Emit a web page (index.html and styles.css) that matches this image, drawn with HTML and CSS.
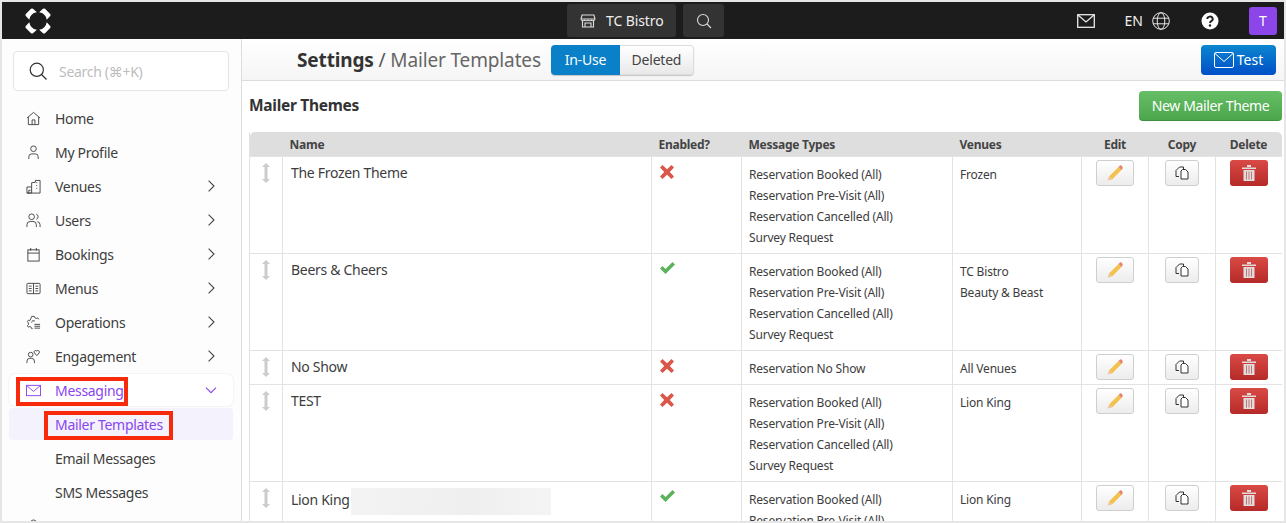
FILE: index.html
```html
<!DOCTYPE html>
<html lang="en">
<head>
<meta charset="utf-8">
<title>Mailer Templates</title>
<link rel="stylesheet" href="styles.css">
</head>
<body>
<div class="app">
  <header class="topbar">
    <div class="top-left">
      <svg class="logo" viewBox="0 0 26 26" width="26" height="26"><g fill="#fff"><path d="M8 .8 11.800 4.300A9 9 0 0 0 4.300 11.800L.8 8Q0 7 .8 6L6 .8Q7 0 8 .8Z"/><path d="M8 .8 11.800 4.300A9 9 0 0 0 4.300 11.800L.8 8Q0 7 .8 6L6 .8Q7 0 8 .8Z" transform="rotate(90 13 13)"/><path d="M8 .8 11.800 4.300A9 9 0 0 0 4.300 11.800L.8 8Q0 7 .8 6L6 .8Q7 0 8 .8Z" transform="rotate(180 13 13)"/><path d="M8 .8 11.800 4.300A9 9 0 0 0 4.300 11.800L.8 8Q0 7 .8 6L6 .8Q7 0 8 .8Z" transform="rotate(270 13 13)"/></g></svg>
    </div>
    <div class="top-center">
      <div class="top-btn venue-btn">
        <svg viewBox="0 0 16 16" width="16" height="16" fill="none" stroke="#ddd" stroke-width="1.100"><path d="M2 2h12l1 4a2 2 0 0 1-3.500 1 2.300 2.300 0 0 1-3.500 0 2.300 2.300 0 0 1-3.500 0A2 2 0 0 1 1 6Z"/><path d="M2.500 8v6h11V8M1 6h14M5 14v-4h6v4"/></svg>
        <span>TC Bistro</span>
      </div>
      <div class="top-btn search-btn">
        <svg viewBox="0 0 16 16" width="16" height="16" fill="none" stroke="#ddd" stroke-width="1.100"><circle cx="7" cy="7" r="5.500"/><path d="m11 11 4 4"/></svg>
      </div>
    </div>
    <div class="top-right">
      <svg class="t-mail" viewBox="0 0 18 14" width="18" height="14" fill="none" stroke="#e8e8e8" stroke-width="1.300"><rect x=".7" y=".7" width="16.600" height="12.600"/><path d="m1 1 8 7 8-7"/></svg>
      <span class="lang">EN</span>
      <svg class="t-globe" viewBox="0 0 18 18" width="18" height="18" fill="none" stroke="#e8e8e8" stroke-width="1"><circle cx="9" cy="9" r="8.300"/><ellipse cx="9" cy="9" rx="3.800" ry="8.300"/><path d="M1 6.200h16M1 11.800h16"/></svg>
      <svg class="t-help" viewBox="0 0 18 18" width="18" height="18"><circle cx="9" cy="9" r="8.500" fill="#fff"/><path d="M6.300 7a2.700 2.400 0 1 1 4 2.100c-.9.500-1.300 1-1.300 2" fill="none" stroke="#1c1c1c" stroke-width="1.900"/><circle cx="9" cy="13.500" r="1.200" fill="#1c1c1c"/></svg>
      <div class="avatar">T</div>
    </div>
  </header>
  <div class="body">
    <aside class="sidebar">
      <div class="search">
        <svg viewBox="0 0 18 18" width="18" height="18" fill="none" stroke="#333" stroke-width="1.200"><circle cx="7.800" cy="7.800" r="6.600"/><path d="m12.500 12.500 5 5"/></svg>
        <span>Search (⌘+K)</span>
      </div>
      <nav class="nav">
        <a class="item"><svg viewBox="0 0 16 16" fill="none" stroke="#444"><path d="M1 7.500 8 1.500l7 6M2.500 6.500v8h11v-8M6.500 14.500v-5h3v5"/></svg><span>Home</span></a>
        <a class="item"><svg viewBox="0 0 16 16" fill="none" stroke="#444"><circle cx="8" cy="4" r="3"/><path d="M3 15v-2.500A3 3 0 0 1 6 9.500h4a3 3 0 0 1 3 3V15"/></svg><span>My Profile</span></a>
        <a class="item"><svg viewBox="0 0 16 16" fill="none" stroke="#444"><path d="M1 15V8.500h5V15ZM6 8.500V4l4-.5V1.500h5V15H1M3 15v-3h2"/><path d="M11 4h2M11 7h2M11 10h2" stroke-dasharray="1 1"/></svg><span>Venues</span><svg class="chev" viewBox="0 0 10 10" fill="none" stroke="#444" stroke-width=".9"><path d="m3 .5 4.500 4.500L3 9.500"/></svg></a>
        <a class="item"><svg viewBox="0 0 16 16" fill="none" stroke="#444"><circle cx="6" cy="4" r="3"/><path d="M1 15v-2.500a3.500 3.500 0 0 1 3.500-3.500h3a3.500 3.500 0 0 1 3.500 3.500V15M11 1.200a3 3 0 0 1 0 5.600M12 9.200a3.500 3.500 0 0 1 3 3.300V15"/></svg><span>Users</span><svg class="chev" viewBox="0 0 10 10" fill="none" stroke="#444" stroke-width=".9"><path d="m3 .5 4.500 4.500L3 9.500"/></svg></a>
        <a class="item"><svg viewBox="0 0 16 16" fill="none" stroke="#444"><rect x="2" y="3" width="12" height="12"/><path d="M2 6.500h12M5 1v3M11 1v3"/></svg><span>Bookings</span><svg class="chev" viewBox="0 0 10 10" fill="none" stroke="#444" stroke-width=".9"><path d="m3 .5 4.500 4.500L3 9.500"/></svg></a>
        <a class="item"><svg viewBox="0 0 16 16" fill="none" stroke="#444"><rect x="1" y="2.500" width="14" height="11" rx="1"/><path d="M8 2.500v11M3 5.500h3M3 8h3M3 10.500h3M10 5.500h3M10 8h3M10 10.500h3"/></svg><span>Menus</span><svg class="chev" viewBox="0 0 10 10" fill="none" stroke="#444" stroke-width=".9"><path d="m3 .5 4.500 4.500L3 9.500"/></svg></a>
        <a class="item"><svg viewBox="0 0 16 16" fill="none" stroke="#444"><path d="M7 14.500H6l-.5-1.500-1.500-.7-1.500.7-1-1.500 1-1.200v-2l-1-1.300 1-1.500 1.500.6L5.500 3 6 1.500h3L9.500 3l1.500.7 1.500-.6 1 1.500"/><path d="M6 8a2 2 0 0 1 3.500-1.300M9 10h6M9 12h6M9 14h6"/></svg><span>Operations</span><svg class="chev" viewBox="0 0 10 10" fill="none" stroke="#444" stroke-width=".9"><path d="m3 .5 4.500 4.500L3 9.500"/></svg></a>
        <a class="item"><svg viewBox="0 0 16 16" fill="none" stroke="#444"><circle cx="5" cy="6" r="2.500"/><path d="M1 15v-2a3 3 0 0 1 3-3h2a3 3 0 0 1 3 3v2M11.500 7 9 4.200a1.500 1.500 0 0 1 2.500-2 1.500 1.500 0 0 1 2.500 2Z"/></svg><span>Engagement</span><svg class="chev" viewBox="0 0 10 10" fill="none" stroke="#444" stroke-width=".9"><path d="m3 .5 4.500 4.500L3 9.500"/></svg></a>
        <a class="item open"><svg viewBox="0 0 16 16" fill="none" stroke="#8b45ee"><rect x=".5" y="2.500" width="15" height="11"/><path d="m1 3 7 6 7-6"/></svg><span class="mark mark-a">Messaging</span><svg class="chev" viewBox="0 0 10 10" fill="none" stroke="#8b45ee" stroke-width=".9"><path d="m.8 3 4.200 4.200L9.200 3"/></svg></a>
        <a class="sub active"><span class="mark mark-b">Mailer Templates</span></a>
        <a class="sub"><span>Email Messages</span></a>
        <a class="sub"><span>SMS Messages</span></a>
        <a class="item"><svg viewBox="0 0 16 16" fill="none" stroke="#444"><circle cx="8" cy="4" r="3"/></svg></a>
      </nav>
    </aside>
    <main class="main">
      <div class="pagehead">
        <h1 class="title"><b>Settings</b> / <span>Mailer Templates</span></h1>
        <div class="toggle"><span class="on">In-Use</span><span class="off">Deleted</span></div>
        <button class="test"><svg viewBox="0 0 20 16" width="20" height="16" fill="none" stroke="#fff" stroke-width="1"><rect x=".5" y=".5" width="19" height="15" rx="1.500"/><path d="m1 1.500 9 8 9-8"/></svg>Test</button>
      </div>
      <div class="content">
        <div class="section-head">
          <h2>Mailer Themes</h2>
          <button class="new">New Mailer Theme</button>
        </div>
        <table class="themes">
          <colgroup><col class="c-drag"><col class="c-name"><col class="c-en"><col class="c-types"><col class="c-ven"><col class="c-act"><col class="c-act"><col class="c-act"></colgroup>
          <thead><tr><th></th><th>Name</th><th>Enabled?</th><th>Message Types</th><th>Venues</th><th class="ctr">Edit</th><th class="ctr">Copy</th><th class="ctr">Delete</th></tr></thead>
          <tbody>
            <tr>
              <td class="drag"><svg viewBox="0 0 8 20" width="8" height="20"><path d="M4 0 8 4H5.500v12H8l-4 4-4-4h2.500V4H0Z" fill="#ccc"/></svg></td>
              <td class="name">The Frozen Theme</td>
              <td class="en"><svg viewBox="0 0 14 14" width="14" height="14"><path d="M2.500 0 7 4.200 11.500 0 14 2.500 9.800 7l4.200 4.500-2.500 2.500L7 9.800 2.500 14 0 11.500 4.200 7 0 2.500Z" fill="#d9574b"/></svg></td>
              <td class="list"><div>Reservation Booked (All)</div><div>Reservation Pre-Visit (All)</div><div>Reservation Cancelled (All)</div><div>Survey Request</div></td>
              <td class="list"><div>Frozen</div></td>
              <td class="act"><button class="b-edit"><svg viewBox="0 0 16 16" width="16" height="16"><path d="M11.500 2 14.500 5 5 14.500 2 11.500Z" fill="#f2c14e"/><path d="M11.500 2 13 .5Q14 0 15 1L15.500 2Q16 3 15.500 3.500L14.500 5Z" fill="#e8836a"/><path d="M2 11.500 5 14.500 .5 15.500Z" fill="#eec49a"/></svg></button></td>
              <td class="act"><button class="b-copy"><svg viewBox="0 0 14 14" width="14" height="14" fill="none" stroke="#333"><path d="M8.500 3V1H4.500L1 4.500V10.500H4"/><path d="M7.500 3.500H10.500L13 6V13H6V5Z" fill="#fff"/></svg></button></td>
              <td class="act"><button class="b-del"><svg viewBox="0 0 14 16" width="14" height="16"><path d="M0 2.500h14V4H0ZM5 0h4v2H5ZM1.500 5h11v11h-11Z" fill="#e3dcdc"/><path d="M4.500 6.500v8M7 6.500v8M9.500 6.500v8" stroke="#b77" fill="none"/></svg></button></td>
            </tr>
            <tr>
              <td class="drag"><svg viewBox="0 0 8 20" width="8" height="20"><path d="M4 0 8 4H5.500v12H8l-4 4-4-4h2.500V4H0Z" fill="#ccc"/></svg></td>
              <td class="name">Beers &amp; Cheers</td>
              <td class="en"><svg viewBox="0 0 15 12" width="15" height="12"><path d="M0 6.500 2.500 4 5.500 7 12.500 0 15 2.500 5.500 12Z" fill="#5cb25c"/></svg></td>
              <td class="list"><div>Reservation Booked (All)</div><div>Reservation Pre-Visit (All)</div><div>Reservation Cancelled (All)</div><div>Survey Request</div></td>
              <td class="list"><div>TC Bistro</div><div>Beauty &amp; Beast</div></td>
              <td class="act"><button class="b-edit"><svg viewBox="0 0 16 16" width="16" height="16"><path d="M11.500 2 14.500 5 5 14.500 2 11.500Z" fill="#f2c14e"/><path d="M11.500 2 13 .5Q14 0 15 1L15.500 2Q16 3 15.500 3.500L14.500 5Z" fill="#e8836a"/><path d="M2 11.500 5 14.500 .5 15.500Z" fill="#eec49a"/></svg></button></td>
              <td class="act"><button class="b-copy"><svg viewBox="0 0 14 14" width="14" height="14" fill="none" stroke="#333"><path d="M8.500 3V1H4.500L1 4.500V10.500H4"/><path d="M7.500 3.500H10.500L13 6V13H6V5Z" fill="#fff"/></svg></button></td>
              <td class="act"><button class="b-del"><svg viewBox="0 0 14 16" width="14" height="16"><path d="M0 2.500h14V4H0ZM5 0h4v2H5ZM1.500 5h11v11h-11Z" fill="#e3dcdc"/><path d="M4.500 6.500v8M7 6.500v8M9.500 6.500v8" stroke="#b77" fill="none"/></svg></button></td>
            </tr>
            <tr>
              <td class="drag"><svg viewBox="0 0 8 20" width="8" height="20"><path d="M4 0 8 4H5.500v12H8l-4 4-4-4h2.500V4H0Z" fill="#ccc"/></svg></td>
              <td class="name">No Show</td>
              <td class="en"><svg viewBox="0 0 14 14" width="14" height="14"><path d="M2.500 0 7 4.200 11.500 0 14 2.500 9.800 7l4.200 4.500-2.500 2.500L7 9.800 2.500 14 0 11.500 4.200 7 0 2.500Z" fill="#d9574b"/></svg></td>
              <td class="list"><div>Reservation No Show</div></td>
              <td class="list"><div>All Venues</div></td>
              <td class="act"><button class="b-edit"><svg viewBox="0 0 16 16" width="16" height="16"><path d="M11.500 2 14.500 5 5 14.500 2 11.500Z" fill="#f2c14e"/><path d="M11.500 2 13 .5Q14 0 15 1L15.500 2Q16 3 15.500 3.500L14.500 5Z" fill="#e8836a"/><path d="M2 11.500 5 14.500 .5 15.500Z" fill="#eec49a"/></svg></button></td>
              <td class="act"><button class="b-copy"><svg viewBox="0 0 14 14" width="14" height="14" fill="none" stroke="#333"><path d="M8.500 3V1H4.500L1 4.500V10.500H4"/><path d="M7.500 3.500H10.500L13 6V13H6V5Z" fill="#fff"/></svg></button></td>
              <td class="act"><button class="b-del"><svg viewBox="0 0 14 16" width="14" height="16"><path d="M0 2.500h14V4H0ZM5 0h4v2H5ZM1.500 5h11v11h-11Z" fill="#e3dcdc"/><path d="M4.500 6.500v8M7 6.500v8M9.500 6.500v8" stroke="#b77" fill="none"/></svg></button></td>
            </tr>
            <tr>
              <td class="drag"><svg viewBox="0 0 8 20" width="8" height="20"><path d="M4 0 8 4H5.500v12H8l-4 4-4-4h2.500V4H0Z" fill="#ccc"/></svg></td>
              <td class="name">TEST</td>
              <td class="en"><svg viewBox="0 0 14 14" width="14" height="14"><path d="M2.500 0 7 4.200 11.500 0 14 2.500 9.800 7l4.200 4.500-2.500 2.500L7 9.800 2.500 14 0 11.500 4.200 7 0 2.500Z" fill="#d9574b"/></svg></td>
              <td class="list"><div>Reservation Booked (All)</div><div>Reservation Pre-Visit (All)</div><div>Reservation Cancelled (All)</div><div>Survey Request</div></td>
              <td class="list"><div>Lion King</div></td>
              <td class="act"><button class="b-edit"><svg viewBox="0 0 16 16" width="16" height="16"><path d="M11.500 2 14.500 5 5 14.500 2 11.500Z" fill="#f2c14e"/><path d="M11.500 2 13 .5Q14 0 15 1L15.500 2Q16 3 15.500 3.500L14.500 5Z" fill="#e8836a"/><path d="M2 11.500 5 14.500 .5 15.500Z" fill="#eec49a"/></svg></button></td>
              <td class="act"><button class="b-copy"><svg viewBox="0 0 14 14" width="14" height="14" fill="none" stroke="#333"><path d="M8.500 3V1H4.500L1 4.500V10.500H4"/><path d="M7.500 3.500H10.500L13 6V13H6V5Z" fill="#fff"/></svg></button></td>
              <td class="act"><button class="b-del"><svg viewBox="0 0 14 16" width="14" height="16"><path d="M0 2.500h14V4H0ZM5 0h4v2H5ZM1.500 5h11v11h-11Z" fill="#e3dcdc"/><path d="M4.500 6.500v8M7 6.500v8M9.500 6.500v8" stroke="#b77" fill="none"/></svg></button></td>
            </tr>
            <tr>
              <td class="drag"><svg viewBox="0 0 8 20" width="8" height="20"><path d="M4 0 8 4H5.500v12H8l-4 4-4-4h2.500V4H0Z" fill="#ccc"/></svg></td>
              <td class="name">Lion King<span class="redact"></span></td>
              <td class="en"><svg viewBox="0 0 15 12" width="15" height="12"><path d="M0 6.500 2.500 4 5.500 7 12.500 0 15 2.500 5.500 12Z" fill="#5cb25c"/></svg></td>
              <td class="list"><div>Reservation Booked (All)</div><div>Reservation Pre-Visit (All)</div></td>
              <td class="list"><div>Lion King</div></td>
              <td class="act"><button class="b-edit"><svg viewBox="0 0 16 16" width="16" height="16"><path d="M11.500 2 14.500 5 5 14.500 2 11.500Z" fill="#f2c14e"/><path d="M11.500 2 13 .5Q14 0 15 1L15.500 2Q16 3 15.500 3.500L14.500 5Z" fill="#e8836a"/><path d="M2 11.500 5 14.500 .5 15.500Z" fill="#eec49a"/></svg></button></td>
              <td class="act"><button class="b-copy"><svg viewBox="0 0 14 14" width="14" height="14" fill="none" stroke="#333"><path d="M8.500 3V1H4.500L1 4.500V10.500H4"/><path d="M7.500 3.500H10.500L13 6V13H6V5Z" fill="#fff"/></svg></button></td>
              <td class="act"><button class="b-del"><svg viewBox="0 0 14 16" width="14" height="16"><path d="M0 2.500h14V4H0ZM5 0h4v2H5ZM1.500 5h11v11h-11Z" fill="#e3dcdc"/><path d="M4.500 6.500v8M7 6.500v8M9.500 6.500v8" stroke="#b77" fill="none"/></svg></button></td>
            </tr>
          </tbody>
        </table>
      </div>
    </main>
  </div>
</div>
</body>
</html>
```
FILE: styles.css
```css
* { box-sizing: border-box; }
html, body { margin: 0; height: 100%; }
body {
  font-family: "Noto Sans", "Inter", sans-serif;
  color: #3a3a3a;
  background: #e6e6e6;
  padding: 2px;
  overflow: hidden;
}
.app { height: 519px; width: 1282px; display: flex; flex-direction: column; background: #fff; overflow: hidden; }

.topbar { height: 37px; flex: none; background: #1c1c1c; color: #eee; display: grid; grid-template-columns: 1fr auto 1fr; align-items: center; }
.top-left { padding-left: 23px; display: flex; align-items: center; }
.top-center { display: flex; gap: 7px; margin-left: 5px; }
.top-btn { height: 33px; background: #333; border-radius: 3px; display: flex; align-items: center; }
.venue-btn { width: 109px; padding-left: 13px; gap: 10px; font-size: 14px; letter-spacing: -.1px; color: #eee; }
.search-btn { width: 41px; justify-content: center; }
.top-right { display: flex; align-items: center; justify-content: flex-end; padding-right: 7px; }
.t-mail { margin-right: 30px; }
.lang { font-size: 14px; margin-right: 9px; }
.t-globe { margin-right: 31px; }
.t-help { margin-right: 30px; }
.avatar { width: 28px; height: 28px; background: #8b45e8; border-radius: 3px; display: flex; align-items: center; justify-content: center; font-size: 14px; color: #fff; }

.body { flex: 1; display: flex; min-height: 0; }
.sidebar { width: 240px; flex: none; background: #fdfdfd; border-right: 1px solid #ddd; padding: 12px 8px 0 7px; overflow: hidden; }
.search { height: 40px; margin: 0 4px; border: 1px solid #e4e4e4; border-radius: 4px; background: #fff; display: flex; align-items: center; padding-left: 15px; gap: 12px; font-size: 14px; letter-spacing: -.3px; color: #bdbdbd; }
.nav { margin-top: 10px; display: flex; flex-direction: column; letter-spacing: -.3px; }
.item { height: 34px; display: flex; align-items: center; padding-left: 17px; font-size: 14px; color: #3d3d3d; position: relative; flex: none; }
.item > svg:first-child { width: 15px; height: 15px; margin-right: 14px; flex: none; }
.chev { width: 12px; height: 12px; position: absolute; left: 196px; top: 11px; }
.open { color: #8b45ee; background: #fff; border-radius: 6px; height: 32px; margin: 1px 0 2px; box-shadow: 0 0 2px rgba(0,0,0,.12); }
.open .chev { top: 10px; }
.sub { height: 34px; flex: none; display: flex; align-items: center; padding-left: 46px; font-size: 14px; color: #3d3d3d; }
.active { height: 32px; color: #8b45ee; background: #f3f2fd; border-radius: 4px; margin-bottom: 1px; }
.mark { position: relative; }
.mark::after { content: ""; position: absolute; border: 4px solid #f72a0b; pointer-events: none; }
.mark-a::after { left: -39px; right: -4px; top: -4px; bottom: -6px; }
.mark-b::after { left: -11px; right: -10px; top: -4px; bottom: -6px; }

.main { flex: 1; min-width: 0; display: flex; flex-direction: column; }
.pagehead { height: 42px; flex: none; border-bottom: 1px solid #ddd; background: linear-gradient(#fff, #f5f5f5); display: flex; align-items: center; padding-left: 55px; padding-right: 8px; }
.title { margin: 0; font-size: 19px; letter-spacing: -.14px; font-weight: 400; color: #555; white-space: nowrap; }
.title b { font-weight: 700; color: #333; }
.title span { color: #666; }
.toggle { margin-left: 10px; display: flex; height: 30px; font-size: 14px; letter-spacing: -.2px; border-radius: 4px; box-shadow: 0 1px 1px rgba(0,0,0,.2); }
.toggle span { display: flex; align-items: center; justify-content: center; }
.on { width: 69px; background: #0a80c8; color: #fff; border-radius: 4px 0 0 4px; }
.off { width: 74px; border: 1px solid #ddd; border-left: 0; border-radius: 0 4px 4px 0; background: linear-gradient(#fff, #e9e9e9); color: #444; }
.test { margin-left: auto; width: 75px; height: 30px; border: 0; border-radius: 4px; background: linear-gradient(#0c86cf, #004fc7); color: #fff; font: inherit; font-size: 14px; display: flex; align-items: center; justify-content: center; gap: 3px; padding: 0; }

.content { padding: 10px 2px 0 7px; flex: 1; min-height: 0; overflow: hidden; }
.section-head { display: flex; justify-content: space-between; align-items: center; height: 30px; margin-bottom: 11px; }
.section-head h2 { margin: -2px 0 0; font-size: 15.500px; letter-spacing: -.3px; font-weight: 700; color: #333; }
.new { width: 143px; height: 30px; border: 0; border-bottom: 1px solid #3f8f3f; border-radius: 4px; background: linear-gradient(#66bf66, #4ca64c); color: #fff; font: inherit; font-size: 14px; letter-spacing: -.35px; padding: 0; }

.themes { border-collapse: collapse; table-layout: fixed; width: 1032px; border-left: 1px solid #e3e3e3; }
.c-drag { width: 33px; }
.c-name { width: 369px; }
.c-en { width: 90px; }
.c-types { width: 211px; }
.c-ven { width: 129px; }
.c-act { width: 67px; }
.c-act:last-child { width: 66px; }
.themes th { height: 24px; background: #dedede; font-size: 12px; letter-spacing: -.25px; font-weight: 700; color: #444; text-align: left; padding: 2px 7px 0; white-space: nowrap; }
.themes th:first-child { border-top-left-radius: 5px; }
.themes th:last-child { border-top-right-radius: 5px; }
.themes th.ctr { text-align: center; padding: 2px 0 0; }
.themes td { border: 1px solid #e3e3e3; vertical-align: top; padding: 7px 7px 5px; font-size: 12px; letter-spacing: -.18px; line-height: 21px; color: #3d3d3d; }
.themes td:last-child { border-right: 0; }
.themes td.name { font-size: 14px; letter-spacing: -.3px; line-height: 20px; padding: 6px 7px 6px 8px; }
.themes td.drag { padding: 6px 0 0; text-align: center; }
.drag svg { display: block; margin: 0 auto; }
.themes td.en { padding: 8px 8px 0; }
.en svg { display: block; }
.themes td.act { padding: 3px 0 0; text-align: center; }
.redact { display: inline-block; width: 200px; height: 27px; margin-left: 1px; vertical-align: middle; background: linear-gradient(90deg, #f3f3f3, #efefef 60%, #f4f4f4); }
.act button { height: 26px; border-radius: 3px; padding: 0; display: inline-flex; align-items: center; justify-content: center; vertical-align: top; }
.b-edit { width: 38px; border: 1px solid #cfcfcf; background: linear-gradient(#fff, #ececec); }
.b-copy { width: 34px; border: 1px solid #cfcfcf; background: linear-gradient(#fff, #ececec); }
.b-del { width: 38px; border: 0; background: linear-gradient(#d94a45, #b52a28); }
```
